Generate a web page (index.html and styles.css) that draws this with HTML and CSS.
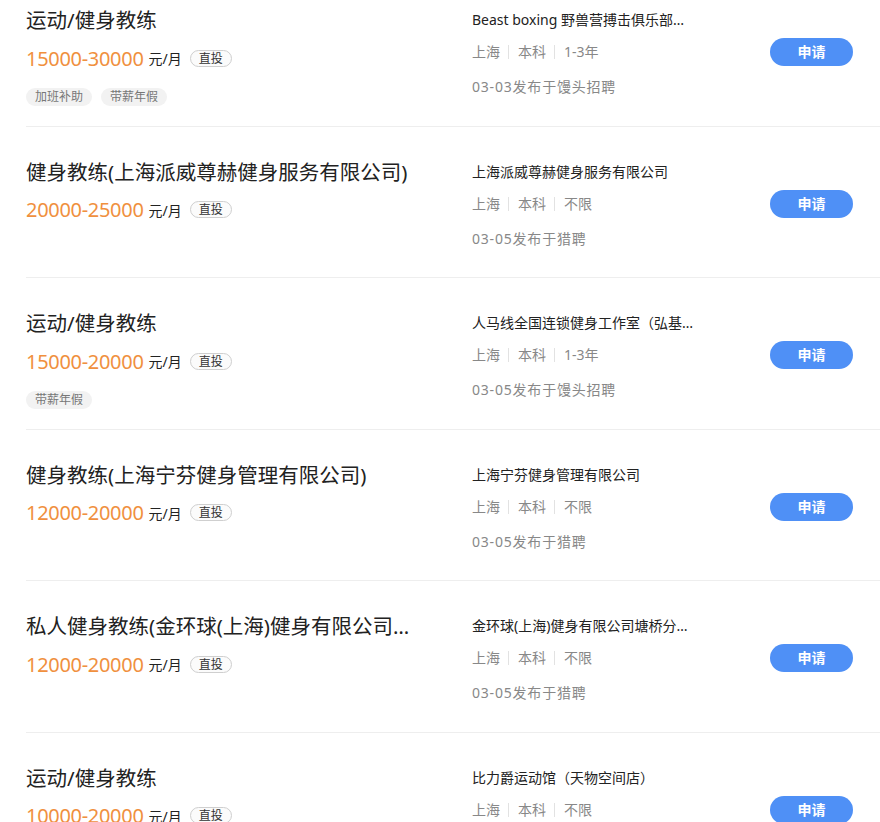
FILE: index.html
```html
<!DOCTYPE html>
<html lang="zh-CN">
<head>
    <meta charset="UTF-8">
    <title>健身教练 - 职位列表</title>
    <link rel="stylesheet" href="styles.css">
</head>
<body>

    <div class="job-list">

        <div class="job">
            <div class="job-main">
                <h2 class="job-title">运动/健身教练</h2>
                <div class="salary-line">
                    <span class="salary">15000-30000</span>
                    <span class="unit">元/月</span>
                    <span class="badge">直投</span>
                </div>
                <div class="welfare">
                    <span>加班补助</span>
                    <span>带薪年假</span>
                </div>
            </div>
            <div class="job-info">
                <div class="company">Beast boxing 野兽营搏击俱乐部（黄浦店）</div>
                <div class="meta"><span>上海</span><span>本科</span><span>1-3年</span></div>
                <div class="date">03-03发布于馒头招聘</div>
            </div>
            <a class="apply" href="#">申请</a>
        </div>

        <div class="job">
            <div class="job-main">
                <h2 class="job-title">健身教练(上海派威尊赫健身服务有限公司)</h2>
                <div class="salary-line">
                    <span class="salary">20000-25000</span>
                    <span class="unit">元/月</span>
                    <span class="badge">直投</span>
                </div>
            </div>
            <div class="job-info">
                <div class="company">上海派威尊赫健身服务有限公司</div>
                <div class="meta"><span>上海</span><span>本科</span><span>不限</span></div>
                <div class="date">03-05发布于猎聘</div>
            </div>
            <a class="apply" href="#">申请</a>
        </div>

        <div class="job">
            <div class="job-main">
                <h2 class="job-title">运动/健身教练</h2>
                <div class="salary-line">
                    <span class="salary">15000-20000</span>
                    <span class="unit">元/月</span>
                    <span class="badge">直投</span>
                </div>
                <div class="welfare">
                    <span>带薪年假</span>
                </div>
            </div>
            <div class="job-info">
                <div class="company">人马线全国连锁健身工作室（弘基广场店）</div>
                <div class="meta"><span>上海</span><span>本科</span><span>1-3年</span></div>
                <div class="date">03-05发布于馒头招聘</div>
            </div>
            <a class="apply" href="#">申请</a>
        </div>

        <div class="job">
            <div class="job-main">
                <h2 class="job-title">健身教练(上海宁芬健身管理有限公司)</h2>
                <div class="salary-line">
                    <span class="salary">12000-20000</span>
                    <span class="unit">元/月</span>
                    <span class="badge">直投</span>
                </div>
            </div>
            <div class="job-info">
                <div class="company">上海宁芬健身管理有限公司</div>
                <div class="meta"><span>上海</span><span>本科</span><span>不限</span></div>
                <div class="date">03-05发布于猎聘</div>
            </div>
            <a class="apply" href="#">申请</a>
        </div>

        <div class="job">
            <div class="job-main">
                <h2 class="job-title">私人健身教练(金环球(上海)健身有限公司塘桥分公司)</h2>
                <div class="salary-line">
                    <span class="salary">12000-20000</span>
                    <span class="unit">元/月</span>
                    <span class="badge">直投</span>
                </div>
            </div>
            <div class="job-info">
                <div class="company">金环球(上海)健身有限公司塘桥分公司</div>
                <div class="meta"><span>上海</span><span>本科</span><span>不限</span></div>
                <div class="date">03-05发布于猎聘</div>
            </div>
            <a class="apply" href="#">申请</a>
        </div>

        <div class="job">
            <div class="job-main">
                <h2 class="job-title">运动/健身教练</h2>
                <div class="salary-line">
                    <span class="salary">10000-20000</span>
                    <span class="unit">元/月</span>
                    <span class="badge">直投</span>
                </div>
            </div>
            <div class="job-info">
                <div class="company">比力爵运动馆（天物空间店）</div>
                <div class="meta"><span>上海</span><span>本科</span><span>不限</span></div>
                <div class="date">03-05发布于猎聘</div>
            </div>
            <a class="apply" href="#">申请</a>
        </div>

    </div>

</body>
</html>
```

FILE: styles.css
```css
* {
    margin: 0;
    padding: 0;
    box-sizing: border-box;
}

body {
    font-family: 'Noto Sans', 'Noto Sans CJK SC', sans-serif;
    background-color: #ffffff;
    color: #333;
    overflow: hidden;
}

/* la lista esta desplazada: la primera fila queda cortada arriba */
.job-list {
    margin-top: -25px;
    padding-left: 26px;
}

.job {
    display: flex;
    align-items: flex-start;
    height: 151.5px;
    padding-top: 31px;
    padding-right: 27px;
    border-bottom: 1px solid #eeeeee;
}

.job-main {
    width: 446px;
    flex-shrink: 0;
}

.job-title {
    font-size: 20.5px;
    font-weight: normal;
    line-height: 28px;
    color: #222;
    max-width: 392px;
    white-space: nowrap;
    overflow: hidden;
    text-overflow: ellipsis;
}

.salary-line {
    display: flex;
    align-items: center;
    height: 28px;
    margin-top: 10px;
}

.salary {
    font-size: 20px;
    color: #f0903e;
    letter-spacing: -0.3px;
}

.unit {
    font-size: 14px;
    color: #222;
    margin-left: 5px;
}

.badge {
    font-size: 12px;
    line-height: 15px;
    color: #333;
    border: 1px solid #cfcfcf;
    border-radius: 9px;
    padding: 0 8px;
    margin-left: 8px;
    background-color: #fbfbfb;
}

.welfare {
    display: flex;
    gap: 9px;
    margin-top: 16px;
}

.welfare span {
    font-size: 12px;
    line-height: 18px;
    color: #777;
    background-color: #f2f2f2;
    border-radius: 9px;
    padding: 0 9px;
}

.job-info {
    flex: 1;
}

.company {
    font-size: 14px;
    line-height: 28px;
    color: #222;
    max-width: 222px;
    white-space: nowrap;
    overflow: hidden;
    text-overflow: ellipsis;
}

.meta {
    display: flex;
    align-items: center;
    font-size: 14px;
    line-height: 20px;
    color: #888;
    margin-top: 8px;
}

.meta span + span {
    border-left: 1px solid #e2e2e2;
    margin-left: 8px;
    padding-left: 9px;
    line-height: 14px;
}

.date {
    font-size: 14px;
    line-height: 20px;
    color: #888;
    letter-spacing: 0.8px;
    margin-top: 15px;
}

.apply {
    flex-shrink: 0;
    width: 83px;
    height: 28px;
    margin-top: 32px;
    border-radius: 14px;
    background-color: #4f90f6;
    color: white;
    font-size: 14px;
    font-weight: bold;
    line-height: 28px;
    text-align: center;
    text-decoration: none;
}
```
